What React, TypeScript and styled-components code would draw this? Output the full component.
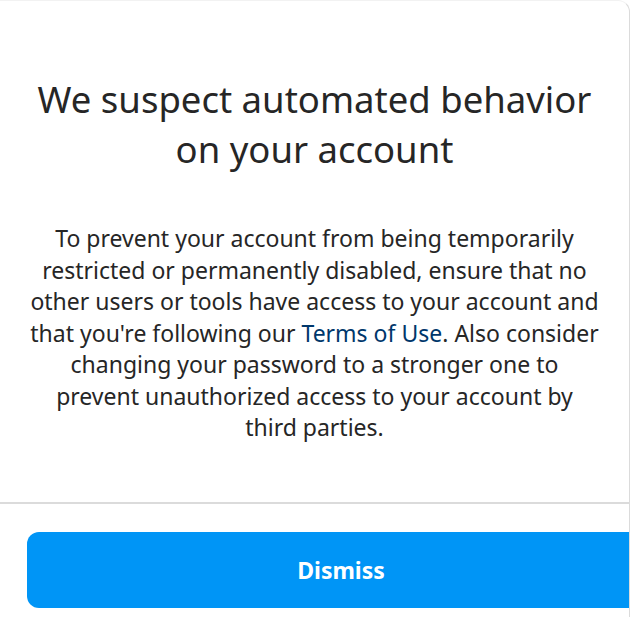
import React from "react";
import styled, { createGlobalStyle } from "styled-components";

const Global = createGlobalStyle`
  html, body { margin: 0; padding: 0; background: #ffffff; }
  body { font-family: "Noto Sans", "Open Sans", sans-serif; -webkit-font-smoothing: antialiased; }
`;

const Card = styled.div`
  width: 630px;
  height: 617px;
  box-sizing: border-box;
  background: #ffffff;
  border-right: 1px solid #dbdbdb;
  border-top: 1px solid #f2f2f2;
  border-top-right-radius: 12px;
  overflow: hidden;
  display: flex;
  flex-direction: column;
`;

const Content = styled.div`
  padding: 73px 24px 0;
  display: flex;
  flex-direction: column;
  align-items: center;
  text-align: center;
  height: 501px;
  flex: none;
  box-sizing: border-box;
`;

const Title = styled.h1`
  margin: 0;
  font-size: 36.5px;
  line-height: 50px;
  font-weight: 400;
  color: #262626;
  white-space: nowrap;
`;

const Body = styled.p`
  margin: 49px 0 0;
  font-size: 23px;
  line-height: 31.5px;
  color: #262626;
  white-space: nowrap;
`;

const Link = styled.a`
  color: #00376b;
  text-decoration: none;
`;

const Divider = styled.div`
  height: 2px;
  flex: none;
  background: #dbdbdb;
`;

const Footer = styled.div`
  padding: 28px 0 0 27px;
`;

const Button = styled.button`
  display: block;
  width: 628px;
  height: 76px;
  border: none;
  border-radius: 12px;
  background: #0095f6;
  color: #ffffff;
  font-family: inherit;
  font-size: 23px;
  font-weight: 700;
  padding: 0;
  cursor: pointer;
`;

export default function App() {
  return (
    <>
      <Global />
      <Card>
        <Content>
          <Title>
            We suspect automated behavior
            <br />
            on your account
          </Title>
          <Body>
            To prevent your account from being temporarily
            <br />
            restricted or permanently disabled, ensure that no
            <br />
            other users or tools have access to your account and
            <br />
            that you're following our <Link href="#">Terms of Use</Link>. Also consider
            <br />
            changing your password to a stronger one to
            <br />
            prevent unauthorized access to your account by
            <br />
            third parties.
          </Body>
        </Content>
        <Divider />
        <Footer>
          <Button>Dismiss</Button>
        </Footer>
      </Card>
    </>
  );
}
